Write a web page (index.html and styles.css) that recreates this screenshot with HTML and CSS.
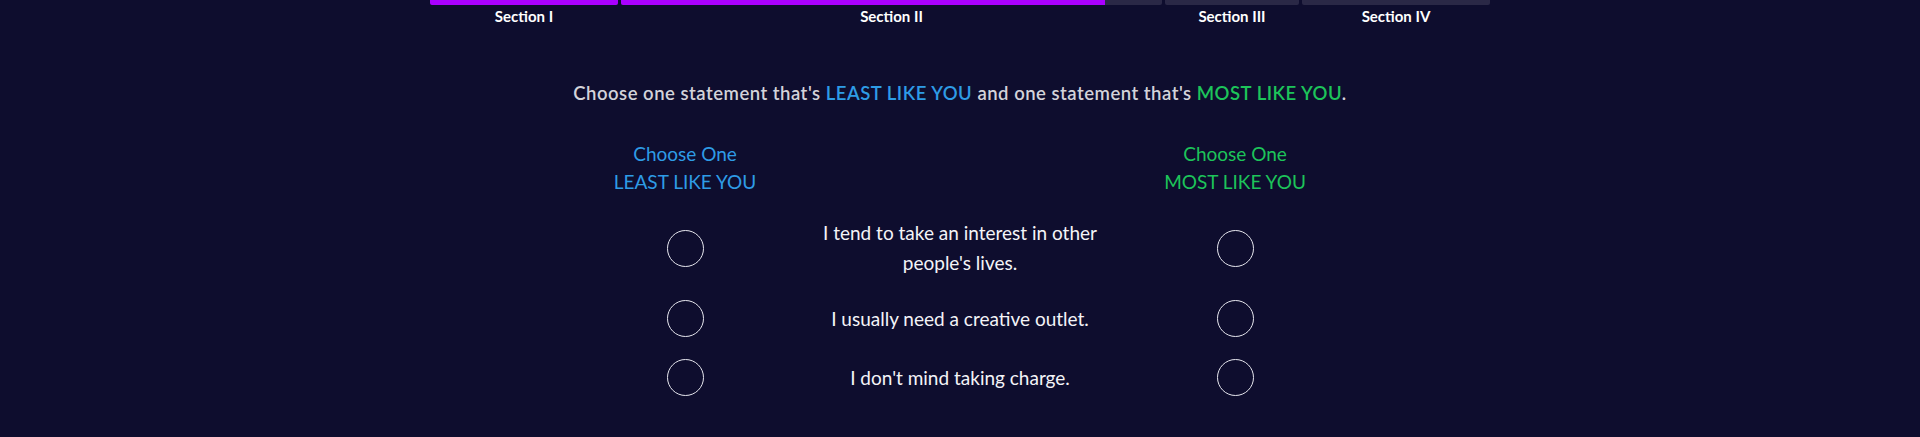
FILE: index.html
```html
<!DOCTYPE html>
<html lang="en">
<head>
<meta charset="utf-8">
<title>Assessment</title>
<link rel="stylesheet" href="styles.css">
</head>
<body>
<div class="progress">
  <div class="seg" style="flex-basis:188px">
    <div class="bar"><div class="fill" style="width:100%"></div></div>
    <div class="label">Section I</div>
  </div>
  <div class="seg" style="flex-basis:541px">
    <div class="bar"><div class="fill" style="width:89.5%"></div></div>
    <div class="label">Section II</div>
  </div>
  <div class="seg" style="flex-basis:134px">
    <div class="bar"></div>
    <div class="label">Section III</div>
  </div>
  <div class="seg" style="flex-basis:188px">
    <div class="bar"></div>
    <div class="label">Section IV</div>
  </div>
</div>

<p class="instructions">Choose one statement that's <span class="least">LEAST LIKE YOU</span> and one statement that's <span class="most">MOST LIKE YOU</span>.</p>

<div class="question">
  <div class="head least">Choose One<br>LEAST LIKE YOU</div>
  <div></div>
  <div class="head most">Choose One<br>MOST LIKE YOU</div>

  <div class="cell"><span class="radio"></span></div>
  <div class="statement">I tend to take an interest in other<br>people's lives.</div>
  <div class="cell"><span class="radio"></span></div>

  <div class="cell"><span class="radio"></span></div>
  <div class="statement">I usually need a creative outlet.</div>
  <div class="cell"><span class="radio"></span></div>

  <div class="cell"><span class="radio"></span></div>
  <div class="statement">I don't mind taking charge.</div>
  <div class="cell"><span class="radio"></span></div>
</div>
</body>
</html>
```
FILE: styles.css
```css
html, body {
  margin: 0;
  padding: 0;
  background: #0e0d2e;
  font-family: Lato, "Open Sans", sans-serif;
  color: #f2f2f6;
}

.progress {
  width: 1060px;
  margin: 0 auto;
  display: flex;
  gap: 3px;
}

.seg {
  flex-grow: 0;
  flex-shrink: 0;
  display: flex;
  flex-direction: column;
  align-items: stretch;
}

.bar {
  height: 5px;
  background: #2a2846;
  border-radius: 0 0 2px 2px;
  overflow: hidden;
}

.fill {
  height: 100%;
  background: #aa00ff;
}

.label {
  text-align: center;
  font-size: 15px;
  font-weight: 700;
  line-height: 18px;
  margin-top: 2px;
  color: #ffffff;
}

.instructions {
  margin: 56px 0 0;
  text-align: center;
  font-size: 18.5px;
  letter-spacing: 0.5px;
  line-height: 24px;
  font-weight: 600;
  color: #d3d3da;
}

.least { color: #2e9ce6; }
.most { color: #1dc45a; }

.question {
  width: 750px;
  margin: 35px auto 0;
  display: grid;
  grid-template-columns: 200px 350px 200px;
  row-gap: 22px;
  align-items: center;
}

.head {
  text-align: center;
  font-size: 19px;
  line-height: 28px;
  font-weight: 400;
  margin-bottom: 0;
}

.cell {
  display: flex;
  justify-content: center;
  align-items: center;
}

.radio {
  width: 35px;
  height: 35px;
  border: 1px solid #e6e6ee;
  border-radius: 50%;
}

.statement {
  text-align: center;
  font-size: 19px;
  line-height: 30px;
  color: #f4f4f8;
}
```
